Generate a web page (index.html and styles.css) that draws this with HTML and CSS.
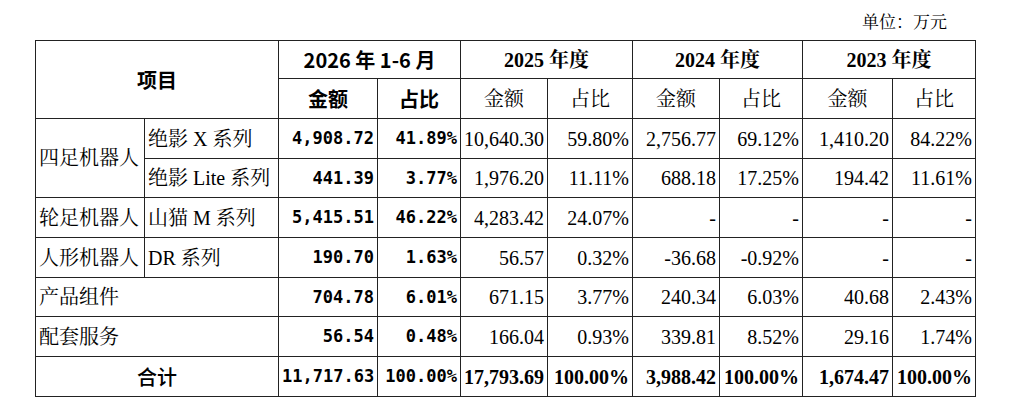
FILE: index.html
```html
<!DOCTYPE html>
<html lang="zh-CN">
<head>
<meta charset="utf-8">
<title>收入构成</title>
<link rel="stylesheet" href="styles.css">
</head>
<body>
<div class="page">
  <div class="unit">单位：万元</div>
  <table class="tbl">
    <colgroup>
      <col class="w109"><col class="w134"><col class="w99"><col class="w83"><col class="w87">
      <col class="w85"><col class="w87"><col class="w83"><col class="w90"><col class="w83">
    </colgroup>
    <thead>
      <tr class="r38">
        <th rowspan="2" colspan="2" class="hei">项目</th>
        <th colspan="2" class="hei">2026 年 1-6 月</th>
        <th colspan="2" class="yr">2025 年度</th>
        <th colspan="2" class="yr">2024 年度</th>
        <th colspan="2" class="yr">2023 年度</th>
      </tr>
      <tr class="r40">
        <th class="hei">金额</th><th class="hei">占比</th>
        <th class="sub">金额</th><th class="sub">占比</th>
        <th class="sub">金额</th><th class="sub">占比</th>
        <th class="sub">金额</th><th class="sub">占比</th>
      </tr>
    </thead>
    <tbody>
      <tr class="r40">
        <td rowspan="2" class="lbl">四足机器人</td>
        <td class="lbl">绝影 X 系列</td>
        <td class="m">4,908.72</td><td class="m">41.89%</td>
        <td class="n">10,640.30</td><td class="n">59.80%</td>
        <td class="n">2,756.77</td><td class="n">69.12%</td>
        <td class="n">1,410.20</td><td class="n">84.22%</td>
      </tr>
      <tr class="r39">
        <td class="lbl">绝影 Lite 系列</td>
        <td class="m">441.39</td><td class="m">3.77%</td>
        <td class="n">1,976.20</td><td class="n">11.11%</td>
        <td class="n">688.18</td><td class="n">17.25%</td>
        <td class="n">194.42</td><td class="n">11.61%</td>
      </tr>
      <tr class="r40">
        <td class="lbl">轮足机器人</td>
        <td class="lbl">山猫 M 系列</td>
        <td class="m">5,415.51</td><td class="m">46.22%</td>
        <td class="n">4,283.42</td><td class="n">24.07%</td>
        <td class="n">-</td><td class="n">-</td>
        <td class="n">-</td><td class="n">-</td>
      </tr>
      <tr class="r40">
        <td class="lbl">人形机器人</td>
        <td class="lbl">DR 系列</td>
        <td class="m">190.70</td><td class="m">1.63%</td>
        <td class="n">56.57</td><td class="n">0.32%</td>
        <td class="n">-36.68</td><td class="n">-0.92%</td>
        <td class="n">-</td><td class="n">-</td>
      </tr>
      <tr class="r39">
        <td colspan="2" class="lbl">产品组件</td>
        <td class="m">704.78</td><td class="m">6.01%</td>
        <td class="n">671.15</td><td class="n">3.77%</td>
        <td class="n">240.34</td><td class="n">6.03%</td>
        <td class="n">40.68</td><td class="n">2.43%</td>
      </tr>
      <tr class="r40">
        <td colspan="2" class="lbl">配套服务</td>
        <td class="m">56.54</td><td class="m">0.48%</td>
        <td class="n">166.04</td><td class="n">0.93%</td>
        <td class="n">339.81</td><td class="n">8.52%</td>
        <td class="n">29.16</td><td class="n">1.74%</td>
      </tr>
      <tr class="r40">
        <td colspan="2" class="hei tot">合计</td>
        <td class="m">11,717.63</td><td class="m">100.00%</td>
        <td class="n b">17,793.69</td><td class="n b">100.00%</td>
        <td class="n b">3,988.42</td><td class="n b">100.00%</td>
        <td class="n b">1,674.47</td><td class="n b">100.00%</td>
      </tr>
    </tbody>
  </table>
</div>
</body>
</html>
```
FILE: styles.css
```css
body {
  margin: 0;
  background: #fff;
  color: #000;
}

.page {
  padding-left: 35px;
  width: 941px;
}

.unit {
  height: 40px;
  display: flex;
  align-items: center;
  justify-content: flex-end;
  padding-right: 29px;
  font-family: "Liberation Serif", "Noto Serif CJK SC", "Noto Sans CJK SC", serif;
  font-size: 17px;
}

.tbl {
  border-collapse: collapse;
  table-layout: fixed;
  width: 941px;
  font-family: "Liberation Serif", "Noto Serif CJK SC", "Noto Sans CJK SC", serif;
  font-size: 20px;
  line-height: 1.2;
}

.w109 { width: 109px; }
.w134 { width: 134px; }
.w99 { width: 99px; }
.w83 { width: 83px; }
.w87 { width: 87px; }
.w85 { width: 85px; }
.w90 { width: 90px; }

.r38 { height: 38px; }
.r39 { height: 39px; }
.r40 { height: 40px; }

.tbl th,
.tbl td {
  border: 1px solid #222;
  padding: 0 3px;
  white-space: nowrap;
  vertical-align: middle;
}

.tbl th {
  text-align: center;
}

.hei {
  font-family: "Noto Sans CJK SC", "DejaVu Sans", sans-serif;
  font-weight: 700;
}

.yr {
  font-weight: 700;
}

.sub {
  font-weight: 400;
}

.lbl {
  text-align: left;
  padding-left: 3px;
}

.tot {
  text-align: center;
  font-weight: 500;
}

.m {
  text-align: right;
  padding: 0 2px 0 0;
  font-family: "DejaVu Sans Mono", "Liberation Mono", monospace;
  font-size: 17px;
  font-weight: 700;
}

.n {
  text-align: right;
  padding: 0 2px 0 0;
}

.b {
  font-weight: 700;
}
```
